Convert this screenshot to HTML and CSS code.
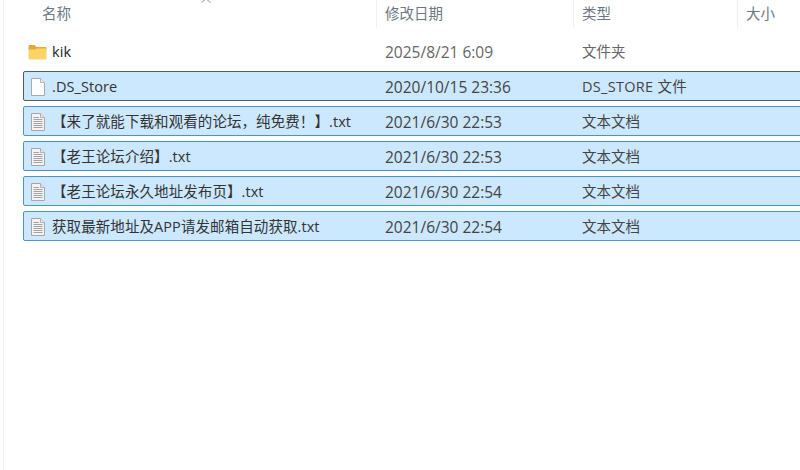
FILE: index.html
```html
<!DOCTYPE html>
<html lang="zh">
<head>
<meta charset="utf-8">
<title>文件列表</title>
<link rel="stylesheet" href="styles.css">
</head>
<body>
<svg class="defs" width="0" height="0" aria-hidden="true">
  <defs>
    <symbol id="plain" viewBox="0 0 16 20">
      <path d="M1.5 1.5H10.5L14.5 5.5V18.5H1.5Z" fill="#fdfdfd" stroke="#a9a9a9"/>
      <path d="M10.5 1.5V5.5H14.5" fill="#f1f1f1" stroke="#b5b5b5"/>
    </symbol>
    <symbol id="text" viewBox="0 0 16 20">
      <path d="M1.5 1.5H10.5L14.5 5.5V18.5H1.5Z" fill="#f3f3f3" stroke="#a6a6a6"/>
      <path d="M10.5 1.5V5.5H14.5" fill="#e8e8e8" stroke="#b0b0b0"/>
      <path d="M3.5 5.5H9M3.5 7.5H12.5M3.5 9.5H12.5M3.5 11.5H12.5M3.5 13.5H12.5M3.5 15.5H12.5" stroke="#a3a3a3" fill="none"/>
    </symbol>
    <symbol id="folder" viewBox="0 0 19 16">
      <path d="M0.5 2.2Q0.5 1 1.7 1H6.5L8.5 3H17.5Q18.5 3 18.5 4V6H0.5Z" fill="#e8a73a"/>
      <path d="M0.5 5.5H7.5L9 4.5H18.5V14.5Q18.5 15.5 17.5 15.5H1.5Q0.5 15.5 0.5 14.5Z" fill="#fbd468"/>
    </symbol>
  </defs>
</svg>
<main class="explorer">
  <header class="head">
    <div class="sort-mark"><svg width="12" height="4" viewBox="0 0 12 4"><path d="M1.5 3.5L6 0L10.5 3.5" fill="none" stroke="#8d97a3"/></svg></div>
    <div class="hcol hname">名称</div>
    <div class="hcol hdate">修改日期</div>
    <div class="hcol htype">类型</div>
    <div class="hcol hsize">大小</div>
  </header>
  <ul class="list">
    <li class="row plainrow">
      <span class="name"><svg class="ico folder" width="19" height="16"><use href="#folder"/></svg><span class="fname dark">kik</span></span>
      <span class="date">2025/8/21 6:09</span><span class="type">文件夹</span>
    </li>
    <li class="row sel focus">
      <span class="name"><svg class="ico" width="16" height="20"><use href="#plain"/></svg><span class="fname">.DS_Store</span></span>
      <span class="date">2020/10/15 23:36</span><span class="type wide">DS_STORE 文件</span>
    </li>
    <li class="row sel">
      <span class="name"><svg class="ico" width="16" height="20"><use href="#text"/></svg><span class="fname">【来了就能下载和观看的论坛，纯免费！】.txt</span></span>
      <span class="date">2021/6/30 22:53</span><span class="type">文本文档</span>
    </li>
    <li class="row sel">
      <span class="name"><svg class="ico" width="16" height="20"><use href="#text"/></svg><span class="fname">【老王论坛介绍】.txt</span></span>
      <span class="date">2021/6/30 22:53</span><span class="type">文本文档</span>
    </li>
    <li class="row sel">
      <span class="name"><svg class="ico" width="16" height="20"><use href="#text"/></svg><span class="fname">【老王论坛永久地址发布页】.txt</span></span>
      <span class="date">2021/6/30 22:54</span><span class="type">文本文档</span>
    </li>
    <li class="row sel">
      <span class="name"><svg class="ico" width="16" height="20"><use href="#text"/></svg><span class="fname">获取最新地址及APP请发邮箱自动获取.txt</span></span>
      <span class="date">2021/6/30 22:54</span><span class="type">文本文档</span>
    </li>
  </ul>
</main>
</body>
</html>
```

FILE: styles.css
```css
html, body {
  margin: 0;
  height: 100%;
  background: #fff;
  overflow: hidden;
}
.defs { display: block; height: 0; }
.explorer {
  height: 470px;
  margin-left: 3px;
  border-left: 1px solid #f0f0f0;
  font-family: "Open Sans", "Noto Sans CJK SC", sans-serif;
  font-size: 14.5px;
  color: #3a3a3a;
}
.head {
  position: relative;
  display: grid;
  grid-template-columns: 373px 197px 164px 62px;
  height: 28px;
  margin-bottom: 8px;
  color: #6d7784;
}
.sort-mark {
  position: absolute;
  left: 196px;
  top: -2px;
  line-height: 0;
}
.hcol {
  padding-left: 8px;
  line-height: 27px;
  border-right: 1px solid #eef0f2;
}
.hname { padding-left: 38px; }
.hsize { border-right: 0; }
.list {
  list-style: none;
  margin: 0 -30px 0 19px;
  padding: 0;
  display: flex;
  flex-direction: column;
  gap: 5px;
}
.row {
  display: grid;
  grid-template-columns: 361px 197px 1fr;
  align-items: center;
  height: 30px;
  box-sizing: border-box;
  border: 1px solid transparent;
  border-radius: 2px;
  line-height: 28px;
  white-space: nowrap;
}
.sel {
  background: #cce8ff;
  border-color: #4a94cb;
}
.focus { border-color: #525c66; }
.name {
  display: flex;
  align-items: center;
  padding-left: 5px;
  min-width: 0;
}
.ico { flex: none; margin-right: 6px; margin-left: 1px; }
.folder { margin-left: -1px; margin-right: 5px; }
.fname, .date, .type { padding-top: 1px; }
.fname { color: #333; letter-spacing: 0.08px; }
.dark { color: #222; }
.date { font-size: 15.5px; }
.wide { letter-spacing: 0.3px; }
.date, .type { color: #666; }
.sel .date, .sel .type { color: #444; }
```
